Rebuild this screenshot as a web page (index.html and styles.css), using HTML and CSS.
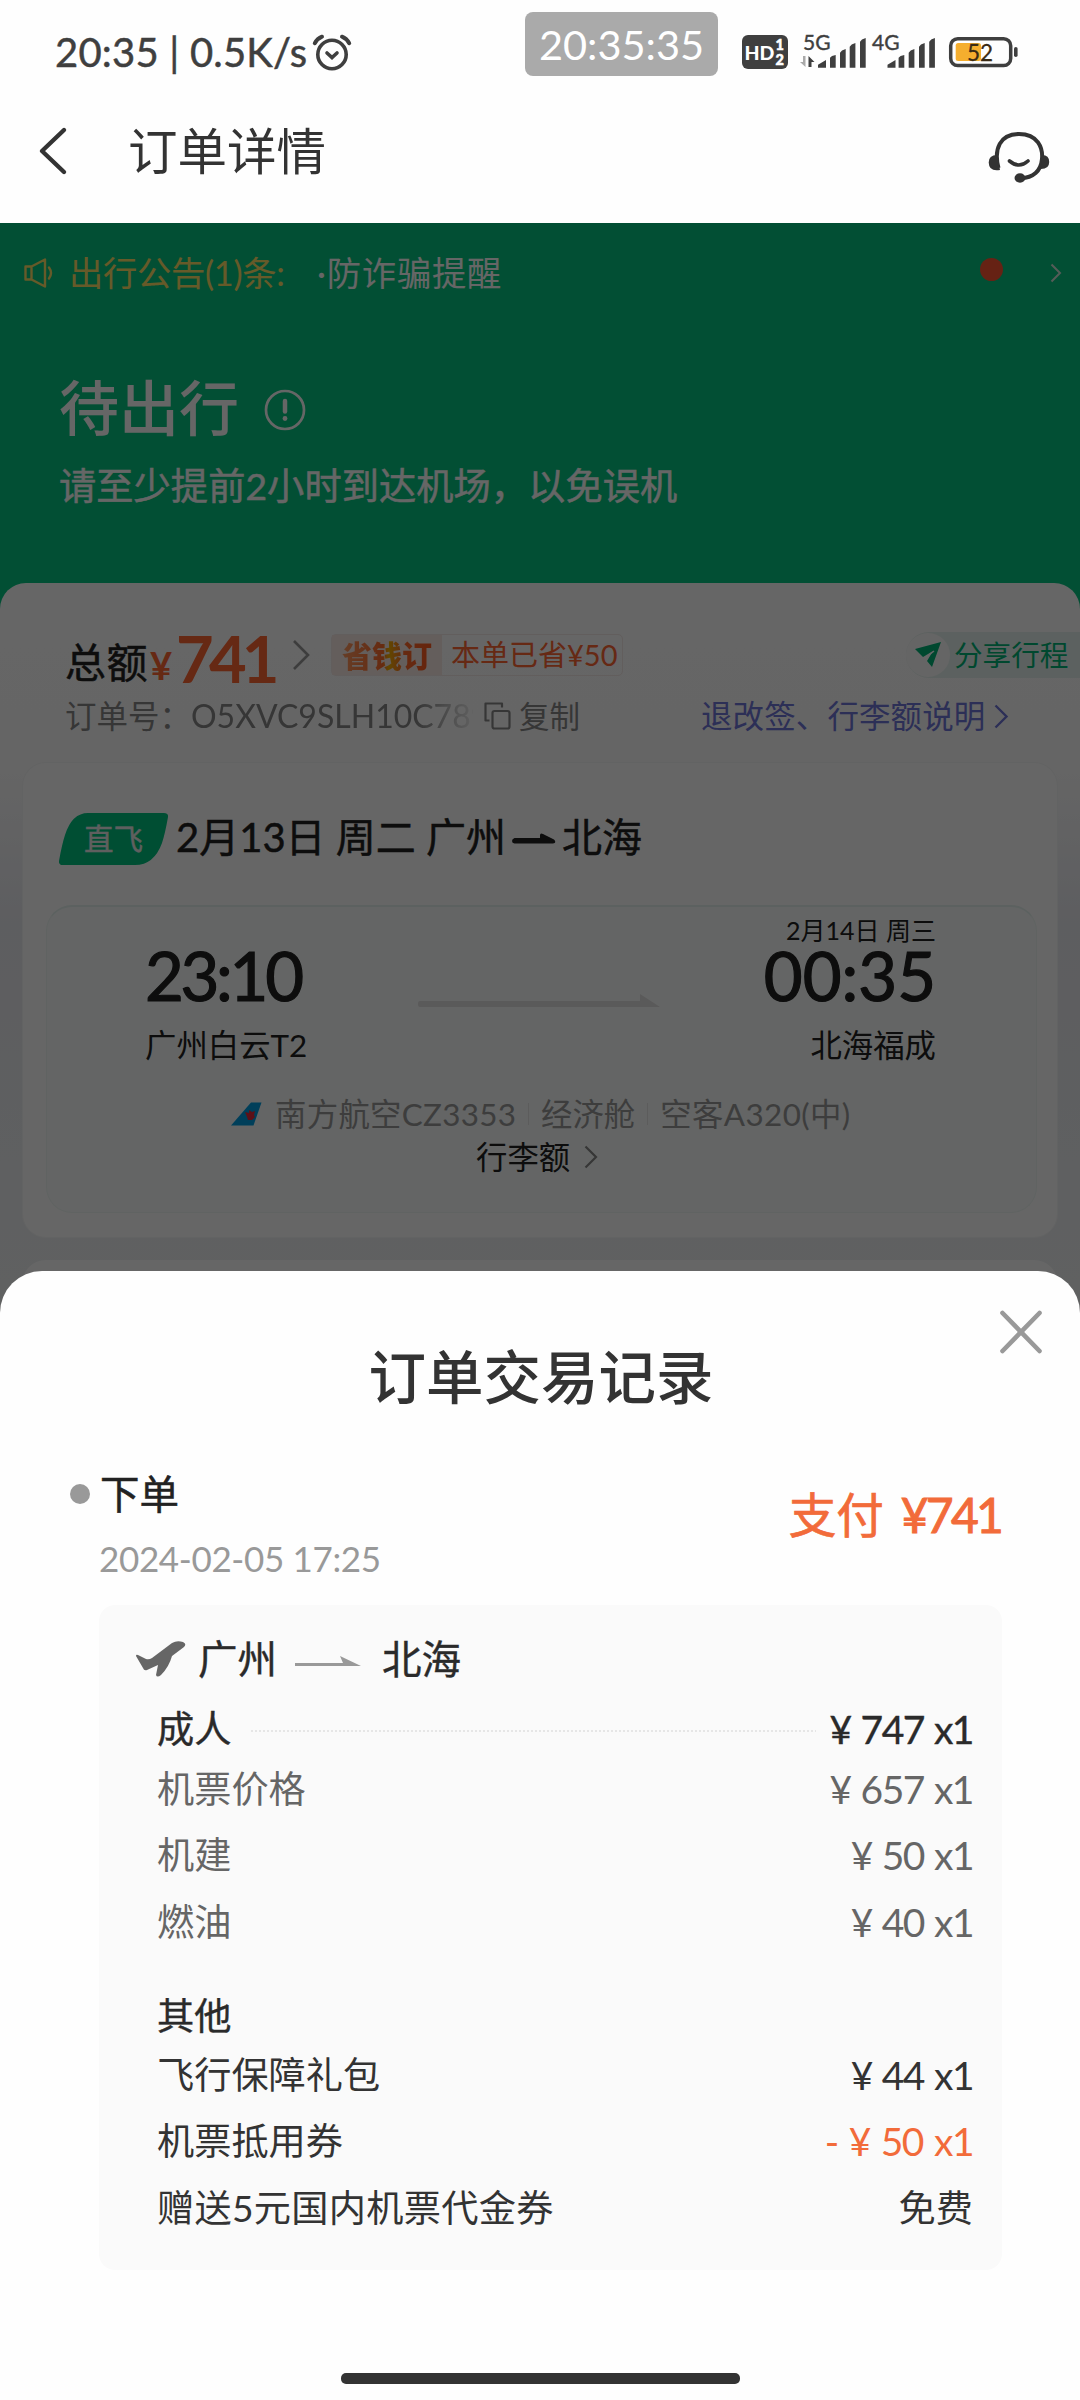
FILE: index.html
```html
<!DOCTYPE html>
<html lang="zh-CN">
<head>
<meta charset="utf-8">
<title>订单详情</title>
<link rel="stylesheet" href="styles.css">
</head>
<body>
<div class="screen">
  <div class="status">
    <span class="status-text">20:35 | 0.5K/s</span>
    <svg class="alarm" width="40" height="40" viewBox="0 0 40 40" fill="none" stroke="#3f3f3f" stroke-width="3.6" stroke-linecap="round">
      <circle cx="20" cy="21.5" r="14.2"/><path d="M15 20l5 4.5 5-4.5"/><path d="M2.8 10.2Q5.500 5.500 10 3.700M37.200 10.200Q34.500 5.500 30 3.700" stroke-width="4"/>
    </svg>
    <svg class="signals" width="284" height="106" viewBox="738 0 284 106" fill="#3f3f3f">
      <rect x="742" y="35" width="46" height="34" rx="6"/>
      <text x="744.500" y="59.500" class="s-hd">HD</text><text x="775.500" y="50" class="s-num">1</text><text x="775.500" y="65" class="s-num">2</text>
      <text x="803" y="50" class="s-net">5G</text><text x="872" y="50" class="s-net">4G</text>
      <path d="M800 62h3v-6h2.500v11z" fill="#aaa"/><path d="M808.500 67v-11l6 6h-3v5z"/>
      <path d="M818 67.700v-3l8-4.700v7.700zM830 67.700v-10l2-1.700 3.700-1v12.700zM840 67.700v-15l2-2.200 3.700-1.500v18.700zM849.700 67.700v-21l2-2.200 3.700-1.500v24.700zM860 67.700v-26l2-2.200 3.700-1.500v29.700z"/>
      <path d="M887.500 67.700v-3l8-4.700v7.700zM898.600 67.700v-10l2-1.700 3.700-1v12.700zM908.700 67.700v-15l2-2.200 3.700-1.500v18.700zM919 67.700v-21l2-2.200 3.700-1.500v24.700zM929.200 67.700v-26l2-2.200 3.700-1.500v29.700z"/>
      <rect x="950.700" y="38.700" width="60" height="26.800" rx="7" fill="none" stroke="#3f3f3f" stroke-width="3.500"/>
      <rect x="955.700" y="43" width="25.300" height="18" rx="2.500" fill="#f5ae2e"/>
      <rect x="1014" y="47" width="3.600" height="10" rx="1.800"/>
      <text x="967" y="61" class="s-bat">52</text>
    </svg>
  </div>
  <div class="clock">20:35:35</div>

  <div class="titlebar">
    <svg class="back" width="32" height="50" viewBox="0 0 32 50" fill="none" stroke="#333" stroke-width="4.400" stroke-linecap="round" stroke-linejoin="round"><path d="M27 4L5 25 27 46"/></svg>
    <h1>订单详情</h1>
    <svg class="service" width="66" height="58" viewBox="986 126 66 58" fill="#333">
      <path d="M998.500 167C993.500 148 1000 133 1019 133S1043 147 1042 158C1041 170 1033 177 1021 177" fill="none" stroke="#333" stroke-width="4"/>
      <path d="M1000 169q-11 2-11.300-7.500 0-7.500 8.300-7.500zM1041 168q8.200 0 8.200-7t-7-7z"/>
      <ellipse cx="1020" cy="177" rx="5.500" ry="4.700"/>
      <path d="M1009.500 160q9.500 8 18.500 0" fill="none" stroke="#333" stroke-width="3.600" stroke-linecap="round"/>
    </svg>
  </div>

  <div class="page">
    <div class="hero">
      <div class="notice">
        <svg class="speaker" width="30" height="32" viewBox="0 0 30 32" fill="none" stroke="#ffe066" stroke-width="2.400" stroke-linejoin="round" stroke-linecap="round"><path d="M1.500 9.500h6L21 2.500v27L7.500 22.500h-6zM7.500 9.500v13M25 10.500q4 5.500 0 11"/></svg>
        <span class="notice-label">出行公告(1)条:</span>
        <span class="notice-item">·防诈骗提醒</span>
        <i class="dot"></i>
        <svg class="n-arrow" width="12" height="20" viewBox="0 0 12 20" fill="none" stroke="#d5e5dd" stroke-width="2"><path d="M1.500 1.500L10 10l-8.500 8.500"/></svg>
      </div>
      <div class="state">
        <h2>待出行</h2>
        <svg width="42" height="42" viewBox="0 0 42 42" fill="none" stroke="#fff" stroke-width="2.700"><circle cx="21" cy="21" r="19"/><path d="M21 12v10.500" stroke-width="4.500" stroke-linecap="round"/><circle cx="21" cy="29.500" r="2.400" fill="#fff" stroke="none"/></svg>
      </div>
      <p class="tip">请至少提前2小时到达机场，以免误机</p>
    </div>

    <div class="body">
      <div class="total">
        <div class="sum"><span class="sum-label">总额</span><span class="yen">¥</span><span class="sum-num">741</span></div>
        <svg class="sum-arrow" width="18" height="32" viewBox="0 0 18 32" fill="none" stroke="#999" stroke-width="2.600"><path d="M2 2l14 14L2 30"/></svg>
        <div class="saver"><b><span>省钱订</span></b><span class="saved">本单已省¥50</span></div>
        <div class="share">
          <i><svg width="28" height="26" viewBox="0 0 28 26" fill="#00b377"><path d="M1 7L27 0 18 25 13 19 19 9 9 15z"/><path d="M11 16l9-7" stroke="#fff" stroke-width="1.500"/></svg></i>
          <span>分享行程</span>
        </div>
      </div>
      <div class="order">
        <span class="order-label">订单号：</span>
        <span class="order-no">O5XVC9SLH10C789</span>
        <svg class="copy" width="27" height="28" viewBox="0 0 27 28" fill="none" stroke="#888" stroke-width="2.200" stroke-linejoin="round"><rect x="8.500" y="9" width="17" height="17.500" rx="2"/><path d="M5.500 18.500h-4v-17h16.500v4"/></svg>
        <span class="copy-text">复制</span>
        <a class="rules">退改签、行李额说明</a>
        <svg width="15" height="25" viewBox="0 0 15 25" fill="none" stroke="#6f75d8" stroke-width="2.400"><path d="M1.500 1.500l11 11-11 11"/></svg>
      </div>

      <div class="trip">
        <div class="trip-head">
          <div class="tag">
            <svg width="109" height="52" viewBox="0 0 109 52"><path d="M29 0H105Q109.500 0 109 4Q106 21 103 30Q95 52 76 52H4Q-.500 52 0 48Q3 31 6 22Q13 0 29 0Z" fill="#00c381"/></svg>
            <span>直飞</span>
          </div>
          <span class="trip-date">2月13日 周二 广州</span>
          <svg class="thick" width="44" height="14" viewBox="0 0 44 14" fill="#222"><path d="M2.500 6H28V3.500Q28 .500 31 2L42 7.500Q45 11 41 11.500H2.500Q0 11 0 9T2.500 6Z"/></svg>
          <span class="trip-to">北海</span>
        </div>
        <div class="flight">
          <div class="legs">
            <div class="leg start"><small></small><strong>23:10</strong><span>广州白云T2</span></div>
            <svg class="long" width="242" height="14" viewBox="0 0 242 14" fill="#e2e0e0"><path d="M2 7H222V0L242 13H2Q0 13 0 10T2 7Z"/></svg>
            <div class="leg end"><small>2月14日 周三</small><strong>00:35</strong><span>北海福成</span></div>
          </div>
          <div class="airline">
            <svg width="31" height="24" viewBox="0 0 31 24"><path d="M20 0.500H30.500L22.500 23.500H0Z" fill="#009de0"/><path d="M14 10l4 1 0-3 3 2 3-1-1 4 1 2-3 3h-4l-1-3z" fill="#e62b3c"/></svg>
            <span class="al-name">南方航空CZ3353</span><i></i><span class="al-cabin">经济舱</span><i></i><span class="al-plane">空客A320(中)</span>
          </div>
          <div class="baggage"><span>行李额</span><svg width="14" height="24" viewBox="0 0 14 24" fill="none" stroke="#888" stroke-width="2.200"><path d="M1.500 1.500L12 12 1.500 22.500"/></svg></div>
        </div>
      </div>
      <div class="next-card"></div>
    </div>
    <div class="mask"></div>
  </div>

  <div class="sheet">
    <svg class="close" width="46" height="48" viewBox="0 0 46 48" stroke="#999" stroke-width="4.600" stroke-linecap="round"><path d="M4.500 5l37 38M41.500 5l-37 38"/></svg>
    <h3>订单交易记录</h3>
    <div class="record">
      <div class="record-main">
        <div class="record-name"><i></i>下单</div>
        <time>2024-02-05 17:25</time>
      </div>
      <div class="pay"><span>支付</span><b>¥741</b></div>
    </div>
    <div class="detail">
      <div class="route">
        <svg width="50" height="36" viewBox="0 0 50 36" fill="#666"><path d="M0 15Q0 13 2 14L10 18Q13 19 16 17L36 2Q41-1 47 1Q51 3 48 6L36 15Q33 26 25 34Q21 37 20 34L22 24L11 29Q8 30 7 27Z"/></svg>
        <span class="from">广州</span>
        <svg class="thin" width="66" height="11" viewBox="0 0 66 11" fill="#999"><path d="M0 7H48L45 0 66 10H0Z"/></svg>
        <span>北海</span>
      </div>
      <div class="line head"><span>成人</span><i class="leader"></i><span class="price">¥ 747 x1</span></div>
      <div class="line sub"><span>机票价格</span><span class="price">¥ 657 x1</span></div>
      <div class="line sub"><span>机建</span><span class="price">¥ 50 x1</span></div>
      <div class="line sub"><span>燃油</span><span class="price">¥ 40 x1</span></div>
      <div class="line head other"><span>其他</span></div>
      <div class="line"><span>飞行保障礼包</span><span class="price">¥ 44 x1</span></div>
      <div class="line"><span>机票抵用券</span><span class="price off">- ¥ 50 x1</span></div>
      <div class="line"><span class="gift">赠送5元国内机票代金券</span><span class="free">免费</span></div>
    </div>
    <div class="home"></div>
  </div>
</div>
</body>
</html>
```
FILE: styles.css
```css
* { box-sizing: border-box; }
body, h1, h2, h3, p { margin: 0; }
body {
  width: 1080px;
  background: #fff;
  color: #333;
  font-family: Lato, "Noto Sans CJK SC", sans-serif;
}
svg { display: block; flex: none; }
span, time, strong, small, h1, h2, h3 { white-space: nowrap; }
i { font-style: normal; flex: none; }

.screen { position: relative; width: 1080px; height: 2400px; overflow: hidden; background: #fefefe; }

/* system status bar */
.status { display: flex; align-items: center; height: 106px; padding: 0 58px 0 55px; }
.status-text { width: 257px; margin-bottom: 3px; font-size: 40px; line-height: 50px; letter-spacing: .2px; color: #3f3f3f; -webkit-text-stroke: .5px #3f3f3f; }
.signals { margin-left: auto; }
.s-hd { font: 900 19.500px Lato, sans-serif; fill: #fff; }
.s-num { font: 900 14.500px Lato, sans-serif; fill: #fff; stroke: #fff; stroke-width: .5px; }
.s-net { font: 400 21px Lato, sans-serif; stroke: #3f3f3f; stroke-width: .4px; }
.s-bat { font: 400 22.500px Lato, sans-serif; fill: #3a2a14; stroke: #3a2a14; stroke-width: .3px; }
.clock {
  position: absolute; left: 525px; top: 12px; width: 193px; height: 64px;
  border-radius: 8px; background: #aaa; color: #fff;
  font-size: 41.500px; line-height: 64px; text-align: center;
}

/* title bar */
.titlebar { display: flex; align-items: center; height: 117px; padding: 0 28px 28px 37px; }
.titlebar h1 { margin-left: 59px; font-size: 49.500px; font-weight: 400; line-height: 60px; color: #333; }
.service { margin-left: auto; margin-top: 10px; }

/* order page under the sheet */
.page { position: relative; height: 2177px; background: #07c582; }
.mask { position: absolute; inset: 0; background: rgba(0, 0, 0, .6); }
.hero { height: 360px; color: #fff; }
.notice { display: flex; align-items: center; height: 99px; padding: 0 18px 0 24px; font-size: 34.300px; line-height: 44px; }
.notice-label { width: 248px; margin-left: 15px; letter-spacing: -.3px; color: #ffe066; }
.notice-item { letter-spacing: .8px; }
.dot { width: 23px; height: 23px; margin: 0 47px 6px auto; border-radius: 50%; background: #ff5533; }
.state { display: flex; align-items: center; height: 76px; margin-top: 48px; padding-left: 59px; }
.state h2 { font-size: 60px; font-weight: 500; line-height: 76px; }
.state svg { margin-left: 25px; margin-top: 4px; }
.tip { height: 40px; margin-top: 20px; padding-left: 59px; font-size: 37.200px; line-height: 40px; letter-spacing: .1px; -webkit-text-stroke: .5px #fff; }

.body {
  height: 1817px; padding-top: 42px; border-radius: 26px 26px 0 0;
  background: linear-gradient(#fff 0, #fcfcfc 190px, #e9eaf0 340px, #eff2f3 700px);
}
.total { display: flex; align-items: center; height: 60px; padding-left: 65px; }
.sum { display: flex; align-items: baseline; width: 227px; height: 60px; margin-top: 5px; line-height: 60px; }
.sum-label { width: 85px; font-size: 41px; line-height: 48px; color: #222; letter-spacing: .5px; -webkit-text-stroke: .5px #222; position: relative; top: -5px; }
.yen { width: 26px; font-size: 38px; font-weight: 700; color: #ff6633; position: relative; top: -3px; }
.sum-num { font-size: 65px; font-weight: 700; color: #ff6633; letter-spacing: -4.800px; }
.saver {
  display: flex; align-items: center; width: 292px; height: 42px; margin-left: 21px;
  border: 1px solid #f4ebe8; border-radius: 5px; font-size: 29px; color: #ff6633;
}
.saver b { display: flex; align-items: center; justify-content: center; width: 110px; height: 40px; background: #f9ebe6; }
.saver b span {
  font-size: 30px; font-weight: 900; line-height: 38px;
  color: transparent; background: linear-gradient(90deg, #ff9a60, #ff6a2c 45%, #f5b400 52%, #ff6a2c 68%, #ff5a20); background-clip: text;
}
.saved { margin-left: 9px; line-height: 38px; }
.share {
  display: flex; align-items: center; width: 174px; height: 46px; margin-left: auto;
  border-radius: 23px 0 0 23px; background: #e7f3ef; color: #00b377; font-size: 28.600px; line-height: 38px;
}
.share i { display: flex; align-items: center; justify-content: center; width: 44px; height: 44px; margin-right: 4px; border-radius: 50%; background: #fdfdfd; }
.order { display: flex; align-items: center; height: 40px; margin-top: 11px; padding-left: 65px; color: #888; font-size: 31.500px; line-height: 40px; }
.order-label { width: 126px; }
.order-no {
  width: 282px; overflow: hidden; font-size: 32px;
  mask-image: linear-gradient(90deg, #000 225px, transparent 290px);
}
.copy { margin-left: 11px; }
.copy-text { width: 171px; margin-left: 8px; font-size: 30.500px; }
.rules { width: 284px; margin: 0 9px 0 11px; color: #6f75d8; letter-spacing: .1px; white-space: nowrap; }

.trip { width: 1036px; height: 476px; margin: 26px auto 0; padding: 50px 23px 0; border: 1px solid #f6f7f7; border-radius: 24px; background: #fff; }
.trip-head { display: flex; align-items: center; height: 52px; padding-left: 13px; color: #222; font-size: 40px; line-height: 50px; -webkit-text-stroke: .5px #222; }
.tag { display: grid; place-items: center; width: 109px; }
.tag > * { grid-area: 1 / 1; }
.tag span { font-size: 29.500px; color: #eee; -webkit-text-stroke: .4px #eee; }
.trip-date { width: 336px; margin: 0 0 4px 8px; }
.trip-to { margin: 0 0 4px 6px; }
.flight { width: 991px; height: 308px; margin-top: 40px; padding-top: 12px; border: 1px solid #f0f8f5; border-top: 2px solid #e6f3ef; border-radius: 26px; background: #f9fdfc; color: #222; }
.legs { display: flex; height: 147px; padding: 0 100px 0 98px; }
.leg { display: flex; flex-direction: column; }
.leg small { height: 26px; font-size: 25px; line-height: 23px; }
.leg strong { height: 66px; font-size: 67px; font-weight: 400; line-height: 60px; -webkit-text-stroke: 1.200px #222; }
.leg.start { width: 273px; }
.start strong { letter-spacing: -3.300px; }
.leg span { height: 40px; margin-top: 14px; font-size: 31.400px; line-height: 40px; }
.leg.end { align-items: flex-end; margin-left: auto; }
.long { margin-top: 75px; }
.airline { display: flex; align-items: center; height: 36px; margin-top: 30px; padding-left: 184px; font-size: 31.400px; line-height: 36px; color: #999; }
.airline i { width: 1px; height: 22px; margin: 0 12px; background: #e6e6e6; }
.al-name { width: 241px; margin-left: 13px; letter-spacing: .3px; }
.al-plane { letter-spacing: .4px; }
.baggage { display: flex; align-items: center; height: 36px; margin-top: 7px; padding-left: 429px; font-size: 31.400px; line-height: 36px; }
.baggage svg { margin-left: 14px; }
.next-card { width: 1036px; height: 300px; margin: 22px auto 0; border-radius: 24px; background: #fff; }

/* bottom sheet */
.sheet { position: absolute; left: 0; right: 0; top: 1271px; bottom: 0; padding-top: 72px; border-radius: 42px 42px 0 0; background: #fefefe; }
.close { position: absolute; right: 36px; top: 37px; }
.sheet h3 { height: 70px; padding-left: 2px; font-size: 57.500px; font-weight: 500; line-height: 68px; text-align: center; }
.record { display: flex; justify-content: space-between; margin-top: 58px; padding: 0 79px 0 70px; }
.record-name { display: flex; align-items: center; height: 46px; font-size: 39.500px; line-height: 46px; color: #222; -webkit-text-stroke: .5px #222; }
.record-name i { width: 20px; height: 20px; margin-right: 10px; border-radius: 50%; background: #999; }
.record time { display: block; height: 40px; margin: 23px 0 0 29px; font-size: 35px; line-height: 36px; letter-spacing: -.35px; color: #999; }
.pay { display: flex; align-items: baseline; height: 60px; margin-top: 14px; font-size: 47.500px; line-height: 60px; color: #f26b3a; -webkit-text-stroke: .7px #f26b3a; }
.pay b { margin-left: 17px; font-weight: 400; font-size: 48px; letter-spacing: -2.800px; -webkit-text-stroke: 1px #f26b3a; }
.detail { width: 903px; height: 665px; margin: 25px 0 0 99px; padding: 29px 29px 0 58px; border-radius: 16px; background: #fafafa; }
.route { display: flex; align-items: center; height: 50px; margin-left: -21px; font-size: 39.500px; line-height: 52px; color: #2a2a2a; -webkit-text-stroke: .4px #2a2a2a; }
.route .from { margin-left: 12px; }
.route .thin { margin: 4px 21px 0 18px; }
.line { display: flex; align-items: center; justify-content: space-between; height: 66.300px; font-size: 37.200px; line-height: 42px; color: #333; }
.line.head { height: 40px; margin: 25px 0 7px; color: #2a2a2a; -webkit-text-stroke: .4px #2a2a2a; }
.line.other { margin: 41px 0 6px; }
.line.sub { color: #666; }
.leader { flex: 1; height: 2px; margin: 4px 14px 0 20px; background: repeating-linear-gradient(90deg, #e6e6e6 0 2px, transparent 2px 4px); }
.price { font-size: 39px; letter-spacing: -1.500px; word-spacing: 1.500px; }
.gift { letter-spacing: .3px; }
.line .off { color: #f26b3a; word-spacing: 2.500px; }
.home { width: 399px; height: 11px; margin: 103px auto 0; border-radius: 5px; background: #333; }
```
